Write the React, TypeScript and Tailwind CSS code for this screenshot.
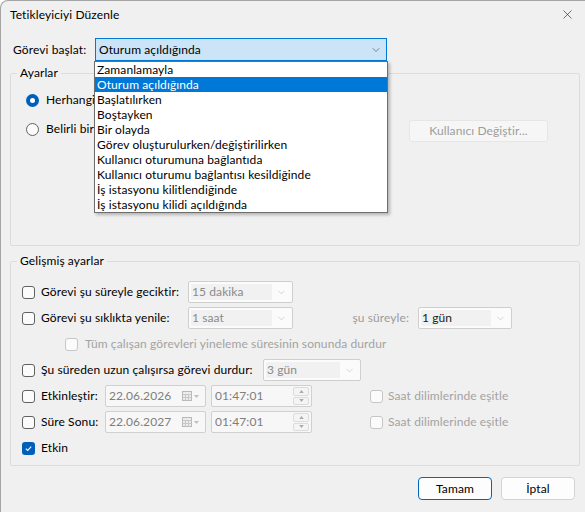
import { X, ChevronDown } from "lucide-react";

const triggers = [
  "Zamanlamayla",
  "Oturum açıldığında",
  "Başlatılırken",
  "Boştayken",
  "Bir olayda",
  "Görev oluşturulurken/değiştirilirken",
  "Kullanıcı oturumuna bağlantıda",
  "Kullanıcı oturumu bağlantısı kesildiğinde",
  "İş istasyonu kilitlendiğinde",
  "İş istasyonu kilidi açıldığında",
];

function Checkbox({ checked, disabled }: { checked?: boolean; disabled?: boolean }) {
  if (checked) {
    return (
      <span className="flex h-[13px] w-[13px] shrink-0 items-center justify-center rounded-[3px] bg-[#005fb8]">
        <svg viewBox="0 0 10 10" className="h-[9px] w-[9px]" fill="none" stroke="white" strokeWidth={1.2}>
          <path d="M2 5.2 4.1 7.2 8 3" />
        </svg>
      </span>
    );
  }
  return (
    <span
      className={`h-[13px] w-[13px] shrink-0 rounded-[3px] border bg-[#fbfbfb] ${
        disabled ? "border-[#c6c6c6]" : "border-[#616161]"
      }`}
    />
  );
}

function Combo({ value, width, dark }: { value: string; width: string; dark?: boolean }) {
  return (
    <div className={`flex h-[22px] items-stretch rounded-[2px] border border-[#cfcfcf] bg-[#fbfbfb] p-[2px] ${width}`}>
      <span className={`flex flex-1 items-center bg-[#f1f1f1] pl-[1px] ${dark ? "text-[#202020]" : "text-[#8a8a8a]"}`}>
        {value}
      </span>
      <span className="flex w-[18px] items-center justify-center">
        <ChevronDown size={11} strokeWidth={1} className="text-[#a8a8a8]" />
      </span>
    </div>
  );
}

function DateBox({ value }: { value: string }) {
  return (
    <div className="flex h-[22px] w-[101px] items-center rounded-[2px] border border-[#d0d0d0] bg-[#f7f7f7] pl-[3px] pr-[5px] text-[#7e7e7e]">
      <span className="flex-1">{value}</span>
      <svg viewBox="0 0 18 10" className="h-[10px] w-[18px]" fill="none">
        <rect x="0.5" y="0.5" width="9" height="9" stroke="#b9b9b9" fill="#ececec" />
        <path d="M0.5 3.5h9M0.5 6.5h9M3.5 3.5v6M6.5 3.5v6" stroke="#c8c8c8" />
        <path d="M12 4h5l-2.5 3z" fill="#c0c0c0" />
      </svg>
    </div>
  );
}

function TimeBox({ value }: { value: string }) {
  return (
    <div className="flex h-[22px] w-[101px] items-center rounded-[2px] border border-[#d0d0d0] bg-[#f7f7f7] pl-[3px] pr-[2px] text-[#7e7e7e]">
      <span className="flex-1">{value}</span>
      <div className="flex h-[18px] w-[16px] flex-col gap-px">
        <span className="flex flex-1 items-center justify-center rounded-[2px] border border-[#dcdcdc] bg-[#f4f4f4]">
          <svg viewBox="0 0 6 4" className="h-[3px] w-[5px]">
            <path d="M0 4 3 0l3 4z" fill="#a9a9a9" />
          </svg>
        </span>
        <span className="flex flex-1 items-center justify-center rounded-[2px] border border-[#dcdcdc] bg-[#f4f4f4]">
          <svg viewBox="0 0 6 4" className="h-[3px] w-[5px]">
            <path d="M0 0 3 4l3-4z" fill="#a9a9a9" />
          </svg>
        </span>
      </div>
    </div>
  );
}

export default function App() {
  return (
    <div className="relative h-[512px] w-[585px] overflow-hidden rounded-tl-[8px] border-l border-t border-[#a4a4a4] bg-[#f0f0f0] font-[Lato,'Noto_Sans',sans-serif] text-[12px] leading-[16px] tracking-[0.1px] text-black">
      {/* title bar */}
      <div className="flex h-[27px] items-center justify-between pl-[9px] pr-[10px]">
        <span>Tetikleyiciyi Düzenle</span>
        <X size={15} strokeWidth={1} className="text-[#222]" />
      </div>

      <div className="flex flex-col pl-[9px] pr-[5px]">
        {/* trigger picker with its open list */}
        <div className="relative z-10 mt-[10px] flex h-[23px] items-center">
          <span className="w-[85px] pl-[3px]">Görevi başlat:</span>
          <div className="relative h-[23px] w-[292px]">
            <div className="flex h-full items-center justify-between border border-[#0078d7] bg-[#cce4f7] pl-[3px] pr-[4px]">
              <span>Oturum açıldığında</span>
              <ChevronDown size={12} strokeWidth={1.1} className="text-[#333]" />
            </div>
            <ul className="absolute left-[-1px] top-[23px] w-[294px] border border-[#6e6e6e] bg-white shadow-[2px_2px_3px_rgba(0,0,0,0.25)]">
              {triggers.map((t, i) => (
                <li
                  key={t}
                  className={`h-[15px] pl-[2px] leading-[15px] ${i === 1 ? "bg-[#0078d7] text-white" : ""}`}
                >
                  {t}
                </li>
              ))}
            </ul>
          </div>
        </div>

        {/* user settings */}
        <fieldset className="mt-[4px] rounded-[2px] border border-[#dcdcdc]">
          <legend className="ml-[6px] px-[3px]">Ayarlar</legend>
          <div className="h-[164px] pl-[15px] pr-[31px] pt-[11px]">
            <label className="flex h-[16px] w-[68px] items-center gap-[7px] overflow-hidden whitespace-nowrap">
              <span className="flex h-[13px] w-[13px] shrink-0 items-center justify-center rounded-full bg-[#005fb8]">
                <span className="h-[5px] w-[5px] rounded-full bg-white" />
              </span>
              Herhangi bir kullanıcı
            </label>
            <div className="mt-[12px] flex items-start justify-between">
              <label className="mt-[1px] flex h-[16px] w-[68px] items-center gap-[7px] overflow-hidden whitespace-nowrap">
                <span className="h-[13px] w-[13px] shrink-0 rounded-full border border-[#616161] bg-[#fbfbfb]" />
                Belirli bir kullanıcı:
              </label>
              <button className="h-[22px] w-[139px] rounded-[3px] border border-[#e6e6e6] bg-[#f6f6f6] text-[#9d9d9d]">
                Kullanıcı Değiştir...
              </button>
            </div>
          </div>
        </fieldset>

        {/* advanced settings */}
        <fieldset className="mt-[7px] rounded-[2px] border border-[#dcdcdc]">
          <legend className="ml-[6px] px-[3px]">Gelişmiş ayarlar</legend>
          <div className="flex flex-col gap-[4px] pb-[6px] pl-[11px] pt-[12px]">
            <div className="flex h-[22px] items-center">
              <label className="flex w-[166px] items-center gap-[6px]">
                <Checkbox />
                Görevi şu süreyle geciktir:
              </label>
              <Combo value="15 dakika" width="w-[105px]" />
            </div>

            <div className="flex h-[22px] items-center">
              <label className="flex w-[166px] items-center gap-[6px]">
                <Checkbox />
                Görevi şu sıklıkta yenile:
              </label>
              <Combo value="1 saat" width="w-[105px]" />
              <span className="w-[125px] pr-[9px] text-right text-[#9c9c9c]">şu süreyle:</span>
              <Combo value="1 gün" width="w-[94px]" dark />
            </div>

            <div className="flex h-[22px] items-center pl-[43px]">
              <label className="flex items-center gap-[7px] text-[#a3a3a3]">
                <Checkbox disabled />
                Tüm çalışan görevleri yineleme süresinin sonunda durdur
              </label>
            </div>

            <div className="flex h-[22px] items-center">
              <label className="flex w-[241px] items-center gap-[6px]">
                <Checkbox />
                Şu süreden uzun çalışırsa görevi durdur:
              </label>
              <Combo value="3 gün" width="w-[98px]" />
            </div>

            {[
              { label: "Etkinleştir:", date: "22.06.2026" },
              { label: "Süre Sonu:", date: "22.06.2027" },
            ].map((r) => (
              <div key={r.label} className="flex h-[22px] items-center">
                <label className="flex w-[83px] items-center gap-[6px]">
                  <Checkbox />
                  {r.label}
                </label>
                <DateBox value={r.date} />
                <div className="w-[5px]" />
                <TimeBox value="01:47:01" />
                <label className="ml-[58px] flex items-center gap-[5px] text-[#a3a3a3]">
                  <Checkbox disabled />
                  Saat dilimlerinde eşitle
                </label>
              </div>
            ))}

            <label className="flex h-[22px] items-center gap-[6px]">
              <Checkbox checked />
              Etkin
            </label>
          </div>
        </fieldset>

        {/* dialog buttons */}
        <div className="mr-[5px] mt-[11px] flex justify-end gap-[9px]">
          <button className="h-[23px] w-[74px] rounded-[4px] border border-[#0067c0] bg-[#fdfdfd]">Tamam</button>
          <button className="h-[23px] w-[74px] rounded-[4px] border border-[#d3d3d3] bg-[#fdfdfd]">İptal</button>
        </div>
      </div>
    </div>
  );
}
